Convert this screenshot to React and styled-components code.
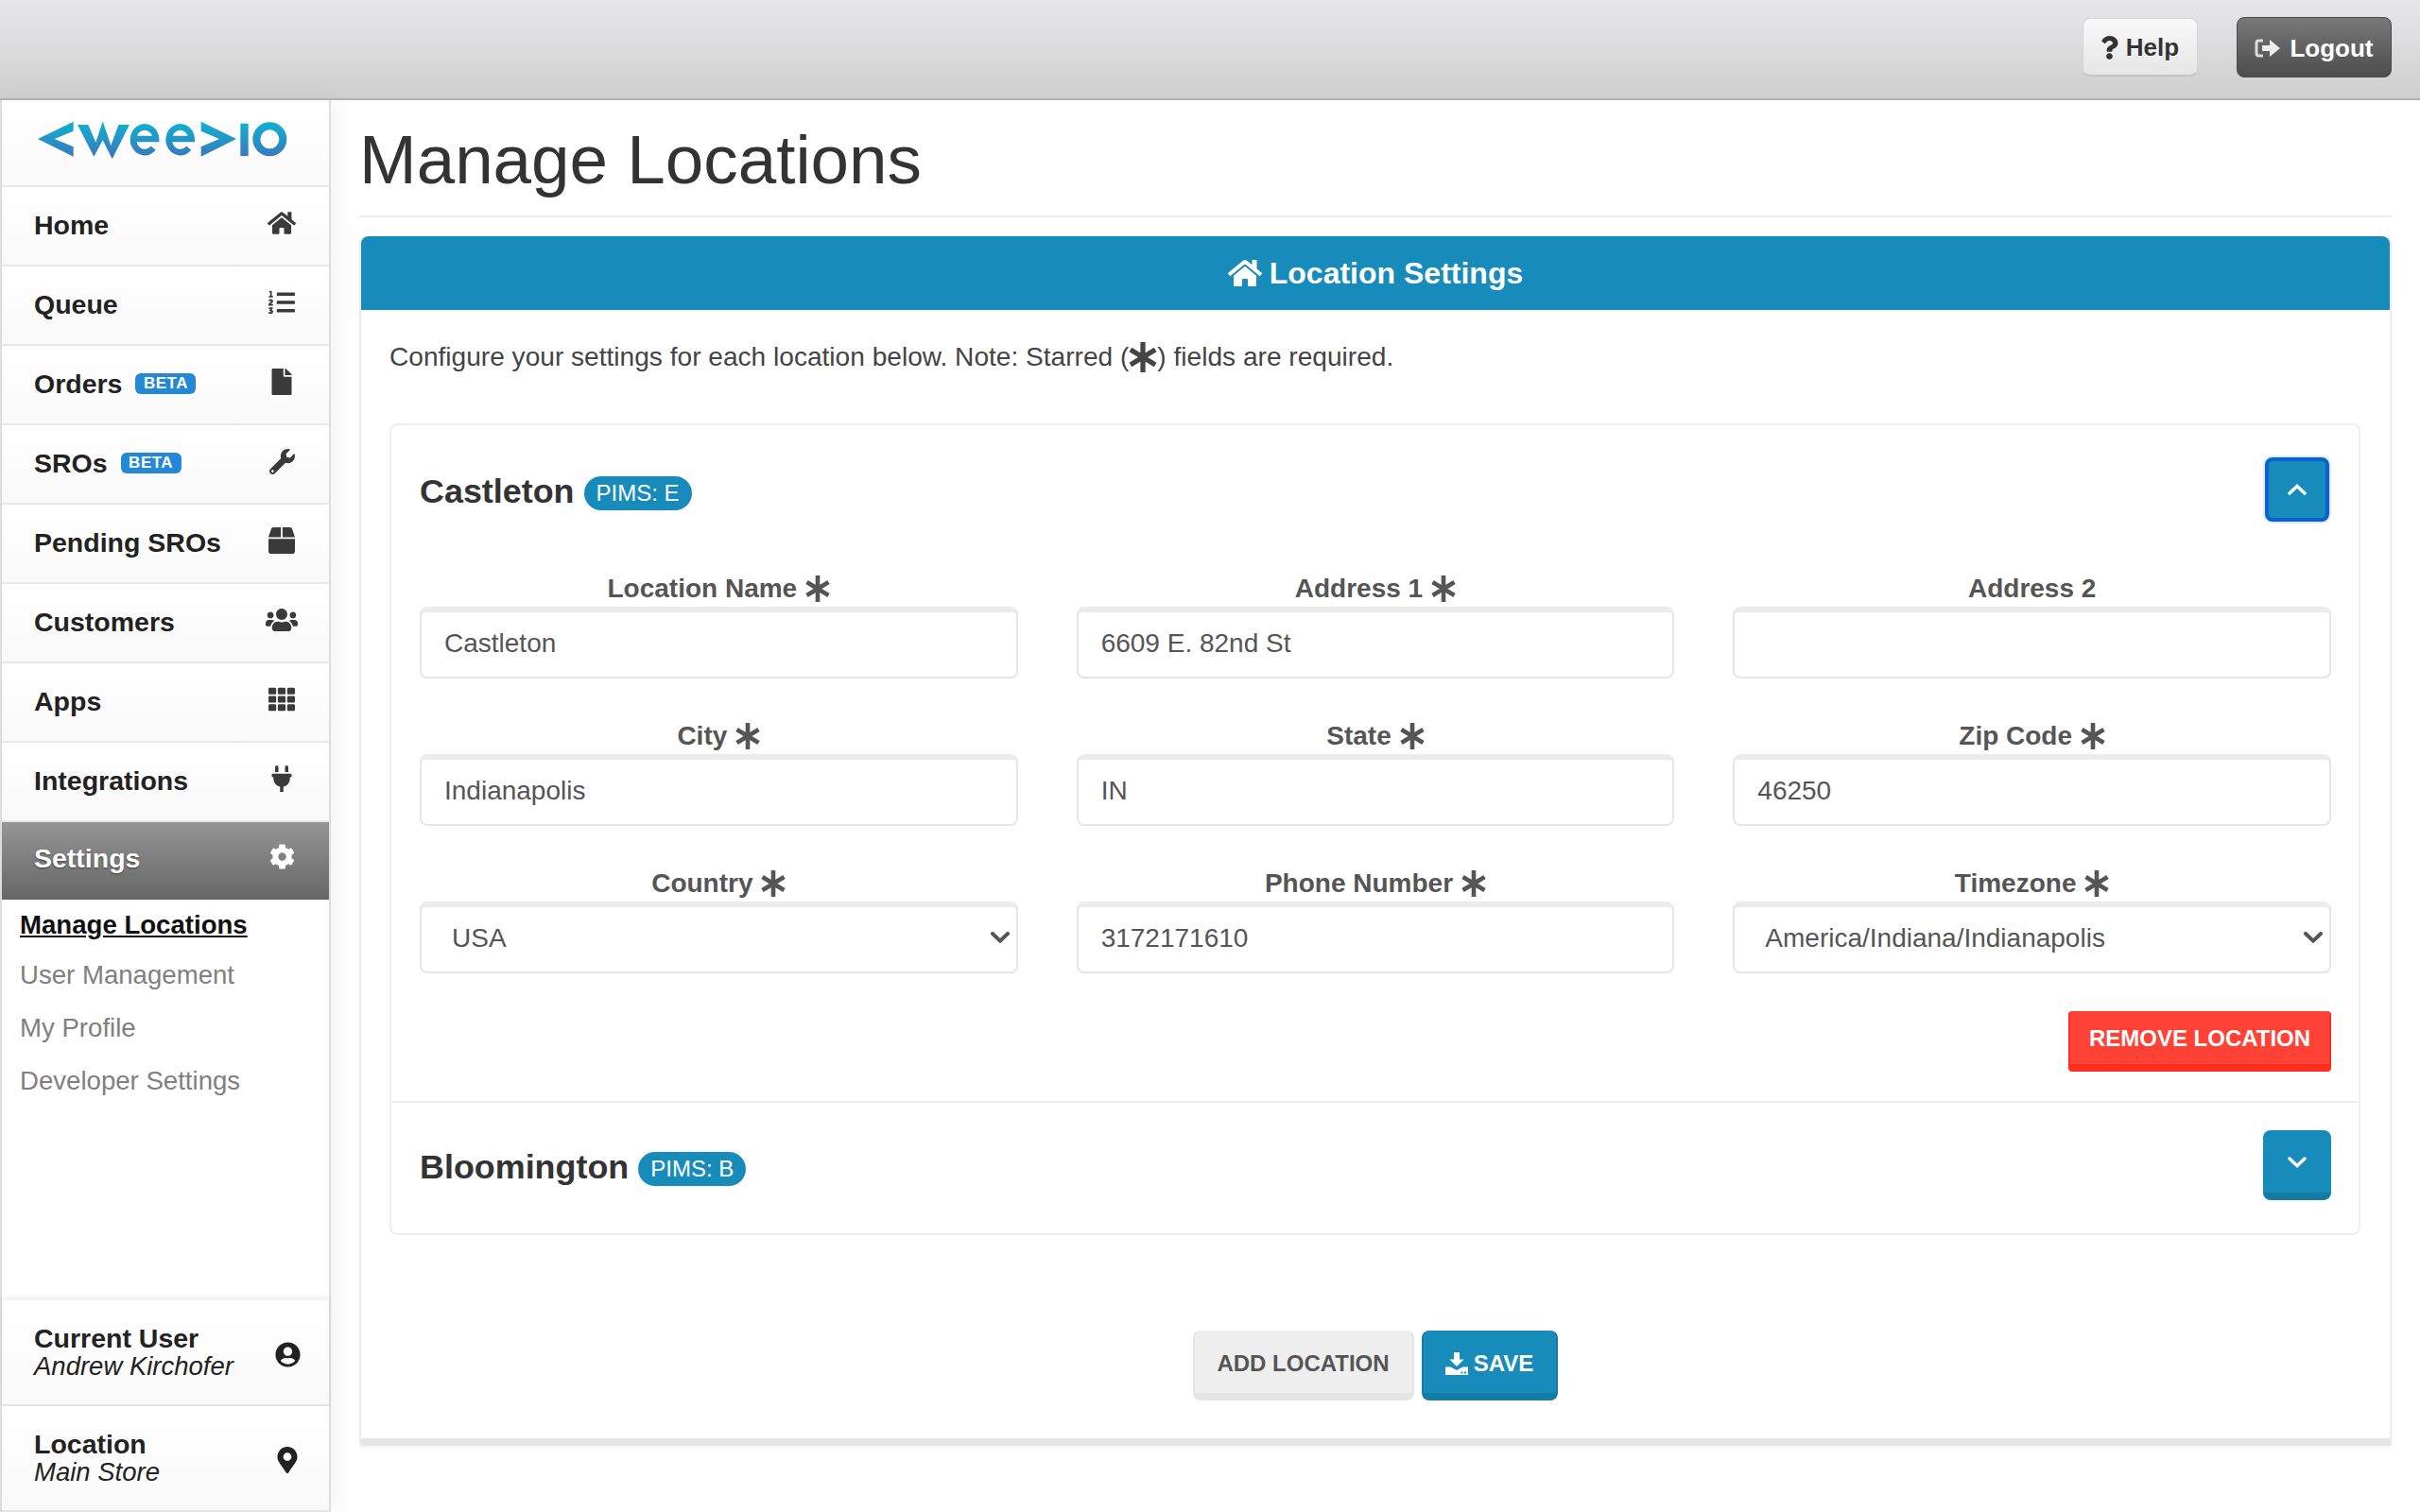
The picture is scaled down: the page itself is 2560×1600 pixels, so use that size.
import React from 'react';
import styled, { createGlobalStyle } from 'styled-components';
import {
  FaHome, FaListOl, FaFile, FaWrench, FaBox, FaUsers, FaTh, FaPlug, FaCog,
  FaUserCircle, FaMapMarkerAlt, FaQuestion,
} from 'react-icons/fa';

const FONT = '"Liberation Sans", Arial, Helvetica, sans-serif';

const Global = createGlobalStyle`
  html, body { margin: 0; padding: 0; background: #fff; }
  * { box-sizing: border-box; }
  body { font-family: ${FONT}; color: #555; }
`;

const Page = styled.div`
  width: 2560px;
  height: 1600px;
  display: flex;
  flex-direction: column;
  overflow: hidden;
  background: #fff;
`;

const TopBar = styled.header`
  height: 106px;
  flex: none;
  display: flex;
  justify-content: flex-end;
  align-items: center;
  gap: 41px;
  padding: 0 30px 4px 0;
  background: linear-gradient(#e7e6e9, #cfcfcf);
  border-bottom: 2px solid #b4b4b4;
`;

const HelpButton = styled.button`
  width: 122px;
  height: 62px;
  display: flex;
  align-items: center;
  justify-content: center;
  gap: 5px;
  font: bold 26px ${FONT};
  color: #333;
  text-shadow: 0 1px 0 #fff;
  background: linear-gradient(#f8f8f8, #e6e6e6);
  border: 1px solid #d6d6d6;
  border-bottom: 2px solid #c4c4c4;
  border-radius: 8px;
  padding: 2px 4px 0 0;
`;

const LogoutButton = styled.button`
  width: 164px;
  height: 64px;
  display: flex;
  align-items: center;
  justify-content: center;
  gap: 10px;
  font: bold 26px ${FONT};
  color: #fff;
  background: linear-gradient(#787878, #4d4d4d);
  border: 1px solid #4a4a4a;
  border-radius: 8px;
  padding: 2px 0 0;
`;

const Body = styled.div`
  flex: 1;
  min-height: 0;
  display: flex;
`;

const Sidebar = styled.aside`
  width: 350px;
  flex: none;
  display: flex;
  flex-direction: column;
  background: #fff;
  border-left: 2px solid #ddd;
  border-right: 2px solid #ddd;
  box-shadow: 6px 0 24px rgba(0, 0, 0, 0.05);
`;

const LogoRow = styled.div`
  height: 92px;
  flex: none;
  padding: 19px 0 0 34px;
  background: linear-gradient(#fff, #fafafa);
  border-bottom: 2px solid #e8e8e8;
  svg { display: block; }
`;

const NavItem = styled.div`
  flex: none;
  display: flex;
  align-items: center;
  justify-content: space-between;
  padding: ${p => (p.$active ? '0 30px 6px 34px' : '0 30px 2px 34px')};
  font-weight: bold;
  font-size: 28.5px;
  color: ${p => (p.$active ? '#fff' : '#222')};
  text-shadow: ${p => (p.$active ? '0 1px 2px rgba(0,0,0,.5)' : 'none')};
  background: ${p => (p.$active ? 'linear-gradient(#959595, #666)' : 'linear-gradient(#fff, #f9f9f9)')};
  border-bottom: ${p => (p.$active ? '0' : '2px solid #e8e8e8')};
  height: ${p => (p.$active ? '82px' : '84px')};
`;

const NavLabel = styled.span`
  display: flex;
  align-items: center;
  gap: 14px;
`;

const BetaBadge = styled.span`
  display: inline-block;
  width: 64px;
  height: 22px;
  line-height: 22px;
  text-align: center;
  border-radius: 6px;
  background: #2388d6;
  color: #fff;
  font-size: 17px;
  font-weight: bold;
  letter-spacing: 0.5px;
`;

const NavIcon = styled.span`
  width: 40px;
  display: flex;
  justify-content: center;
  align-items: center;
  color: ${p => (p.$active ? '#fff' : '#3a3a3a')};
  margin-top: -4px;
`;

const FooterIcon = styled.span`
  width: 40px;
  display: flex;
  justify-content: center;
  align-items: center;
  color: #222;
  margin-top: 4px;
`;

const SubList = styled.nav`
  flex: 1;
`;

const SubItem = styled.a`
  display: block;
  height: ${p => (p.$active ? '54px' : '56px')};
  line-height: ${p => (p.$active ? '54px' : '56px')};
  margin-bottom: ${p => (p.$active ? '-2px' : '0')};
  padding-left: 19px;
  font-size: 27.6px;
  font-weight: ${p => (p.$active ? 'bold' : 'normal')};
  color: ${p => (p.$active ? '#111' : '#808080')};
  text-decoration: ${p => (p.$active ? 'underline' : 'none')};
`;

const FooterBox = styled.div`
  flex: none;
  height: ${p => p.$h}px;
  display: flex;
  align-items: center;
  justify-content: space-between;
  padding: 0 24px 0 34px;
  background: linear-gradient(#fff, #f9f9f9);
  border-bottom: 2px solid #e4e4e4;
  box-shadow: ${p => (p.$shadow ? '0 -4px 6px rgba(0,0,0,.06)' : 'none')};
  color: #222;
`;

const FooterText = styled.div`
  font-size: 28.5px;
  line-height: 29px;
  b { display: block; font-weight: bold; }
  i { display: block; font-style: italic; font-size: 27.5px; }
`;

const Main = styled.main`
  flex: 1;
  min-width: 0;
  padding: 0 30px;
`;

const Title = styled.h1`
  margin: 0 0 20px;
  height: 124px;
  padding-top: 21px;
  font-size: 72.8px;
  line-height: 84px;
  font-weight: normal;
  color: #333;
  border-bottom: 2px solid #eee;
`;

const Card = styled.section`
  height: 1280px;
  border: 2px solid #ececec;
  border-top: 0;
  border-bottom: 8px solid #e6e6e6;
  border-radius: 8px 8px 4px 4px;
  box-shadow: 0 3px 3px rgba(0, 0, 0, 0.03);
  background: #fff;
`;

const CardHead = styled.div`
  height: 78px;
  display: flex;
  align-items: center;
  justify-content: center;
  gap: 8px;
  background: #178cbb;
  color: #fff;
  font-size: 32px;
  font-weight: bold;
  border-radius: 8px 8px 0 0;
`;

const CardBody = styled.div`
  padding: 0 31px 0 30px;
`;

const Intro = styled.p`
  margin: 0;
  height: 120px;
  padding-top: 31px;
  font-size: 28.1px;
  line-height: 38px;
  color: #444;
  display: flex;
  align-items: flex-start;
  svg { margin: 3px 0 0; }
`;

const LocationBox = styled.div`
  border: 2px solid #eee;
  border-radius: 8px;
`;

const LocationSection = styled.div`
  padding: ${p => p.$pad};
  & + & { border-top: 2px solid #eee; }
`;

const LocationHead = styled.div`
  display: flex;
  align-items: center;
  justify-content: space-between;
`;

const LocationName = styled.h3`
  margin: 0;
  padding-top: 4px;
  display: flex;
  align-items: center;
  gap: 10px;
  font-size: 35.9px;
  font-weight: bold;
  color: #333;
`;

const Pill = styled.span`
  height: 36px;
  line-height: 36px;
  padding: 0 13px;
  margin-top: 3px;
  border-radius: 18px;
  background: #178cbb;
  color: #fff;
  font-size: 24px;
  font-weight: normal;
`;

const ToggleButton = styled.button`
  width: 72px;
  height: 74px;
  display: flex;
  align-items: center;
  justify-content: center;
  padding: 2px 0 0;
  background: #178cbb;
  border: 0;
  border-bottom: 8px solid #147ca3;
  border-radius: 8px;
`;

const FocusedToggle = styled.button`
  width: 68px;
  height: 68px;
  margin: 2px;
  display: flex;
  align-items: center;
  justify-content: center;
  padding: 0;
  background: #178cbb;
  border: 4px solid #0a62d0;
  border-radius: 8px;
  box-shadow: 0 0 0 2px #dcebf5;
`;

const FieldGrid = styled.div`
  margin-top: 52px;
  display: grid;
  grid-template-columns: repeat(3, 1fr);
  column-gap: 62px;
  row-gap: 44px;
`;

const Field = styled.label`
  display: block;
`;

const FieldLabel = styled.span`
  height: 36px;
  padding-bottom: 3px;
  display: flex;
  align-items: center;
  justify-content: center;
  gap: 9px;
  font-size: 28px;
  font-weight: bold;
  color: #555;
`;

const TextInput = styled.input`
  display: block;
  width: 100%;
  height: 76px;
  padding: 0 24px 3px;
  font: 28px ${FONT};
  color: #555;
  background: #fff;
  border: 2px solid #e6e6e6;
  border-top: 6px solid #ebebeb;
  border-radius: 8px;
  outline: 0;
`;

const SelectWrap = styled.div`
  position: relative;
`;

const SelectInput = styled.select`
  display: block;
  width: 100%;
  height: 76px;
  padding: 0 32px 3px;
  font: 28px ${FONT};
  color: #555;
  background: #fff;
  border: 2px solid #e6e6e6;
  border-top: 6px solid #ebebeb;
  border-radius: 8px;
  outline: 0;
  appearance: none;
`;

const SelectArrow = styled.span`
  position: absolute;
  right: 9px;
  top: 32px;
  display: flex;
  pointer-events: none;
`;

const RemoveRow = styled.div`
  display: flex;
  justify-content: flex-end;
  margin-top: 40px;
`;

const RemoveButton = styled.button`
  width: 278px;
  height: 64px;
  padding: 2px 0 0;
  font: bold 24px ${FONT};
  color: #fff;
  background: #ff4136;
  border: 2px solid #ff2d1f;
  border-top: 0;
  border-bottom-width: 8px;
  border-radius: 4px;
`;

const Actions = styled.div`
  display: flex;
  justify-content: center;
  gap: 8px;
  margin-top: 101px;
`;

const AddButton = styled.button`
  width: 234px;
  height: 74px;
  padding: 3px 0 0;
  font: bold 24px ${FONT};
  color: #555;
  background: #eee;
  border: 2px solid #e4e4e4;
  border-top: 0;
  border-bottom-width: 8px;
  border-radius: 8px;
`;

const SaveButton = styled.button`
  width: 144px;
  height: 74px;
  padding: 3px 0 0;
  display: flex;
  align-items: center;
  justify-content: center;
  gap: 6px;
  font: bold 24px ${FONT};
  color: #fff;
  background: #178cbb;
  border: 2px solid #147ca3;
  border-top: 0;
  border-bottom-width: 8px;
  border-radius: 8px;
`;

const Logo = () => (
  <svg width="270" height="45" viewBox="110 375 810 135" aria-label="weeio logo">
    <defs>
      <linearGradient id="lg" gradientUnits="userSpaceOnUse" x1="0" y1="385" x2="0" y2="500">
        <stop offset="0" stopColor="#10b2d2" />
        <stop offset="1" stopColor="#3a77bb" />
      </linearGradient>
    </defs>
    <g fill="url(#lg)">
      <polygon points="235,386 122,441 235,497 235,466 175,441 235,416" />
      <polygon points="248,396 282,396 306,452 328,385 354,462 378,396 413,396 358,505 328,445 300,497" />
      <polygon points="640,386 752,441 640,497 640,466 698,441 640,416" />
      <rect x="765" y="392" width="25" height="103" />
    </g>
    <g fill="none" stroke="url(#lg)" strokeWidth="24">
      <path d="M425 441 H497 A36 40 0 1 0 488 470" strokeWidth="20" />
      <path d="M538 441 H610 A36 40 0 1 0 601 470" strokeWidth="20" />
      <circle cx="858" cy="442" r="42" />
    </g>
  </svg>
);

const Star = ({ w = 26, h = 28, color = '#555' }) => (
  <svg width={w} height={h} viewBox="0 0 26 28" fill="none" stroke={color} strokeWidth="4.6">
    <path d="M13 0V28M1.5 7L24.5 21M1.5 21L24.5 7" />
  </svg>
);

const Chevron = ({ up, w = 20, h = 12, color = '#fff', sw = 3.4 }) => (
  <svg width={w} height={h} viewBox="0 0 20 12" fill="none" stroke={color} strokeWidth={sw} strokeLinecap="round" strokeLinejoin="miter">
    <path d={up ? 'M2 10L10 2.4L18 10' : 'M2 2L10 9.6L18 2'} />
  </svg>
);

const LogoutIcon = () => (
  <svg width="27" height="20" viewBox="0 0 27 20">
    <path d="M9 2H4.5A2.5 2.5 0 0 0 2 4.5V15.5A2.5 2.5 0 0 0 4.5 18H9" fill="none" stroke="#ddd" strokeWidth="3" />
    <path d="M8 7H16V1L27 10L16 19V13H8Z" fill="#eee" />
  </svg>
);

const SaveIcon = () => (
  <svg width="24" height="24" viewBox="0 0 24 24">
    <path d="M9 0H15V7.5H19.5L12 15L4.5 7.5H9Z" fill="#fff" />
    <path d="M0 15.5H5.5L12 19L18.5 15.5H24V24H0Z" fill="#fff" />
    <rect x="16.5" y="20.5" width="2" height="2" fill="#178cbb" />
    <rect x="20" y="20.5" width="2" height="2" fill="#178cbb" />
  </svg>
);

const NAV = [
  { label: 'Home', icon: <FaHome size={30} /> },
  { label: 'Queue', icon: <FaListOl size={28} /> },
  { label: 'Orders', beta: true, icon: <FaFile size={28} /> },
  { label: 'SROs', beta: true, icon: <FaWrench size={27} /> },
  { label: 'Pending SROs', icon: <FaBox size={28} /> },
  { label: 'Customers', icon: <FaUsers size={34} /> },
  { label: 'Apps', icon: <FaTh size={28} /> },
  { label: 'Integrations', icon: <FaPlug size={28} /> },
  { label: 'Settings', active: true, icon: <FaCog size={27} /> },
];

const SUB = ['Manage Locations', 'User Management', 'My Profile', 'Developer Settings'];

const FIELDS = [
  { label: 'Location Name', req: true, value: 'Castleton' },
  { label: 'Address 1', req: true, value: '6609 E. 82nd St' },
  { label: 'Address 2', value: '' },
  { label: 'City', req: true, value: 'Indianapolis' },
  { label: 'State', req: true, value: 'IN' },
  { label: 'Zip Code', req: true, value: '46250' },
  { label: 'Country', req: true, value: 'USA', select: true },
  { label: 'Phone Number', req: true, value: '3172171610' },
  { label: 'Timezone', req: true, value: 'America/Indiana/Indianapolis', select: true },
];

export default function App() {
  return (
    <Page>
      <Global />
      <TopBar>
        <HelpButton><FaQuestion size={25} />Help</HelpButton>
        <LogoutButton><LogoutIcon />Logout</LogoutButton>
      </TopBar>
      <Body>
        <Sidebar>
          <LogoRow><Logo /></LogoRow>
          {NAV.map(n => (
            <NavItem key={n.label} $active={n.active}>
              <NavLabel>{n.label}{n.beta && <BetaBadge>BETA</BetaBadge>}</NavLabel>
              <NavIcon $active={n.active}>{n.icon}</NavIcon>
            </NavItem>
          ))}
          <SubList>
            {SUB.map((s, i) => <SubItem key={s} $active={i === 0}>{s}</SubItem>)}
          </SubList>
          <FooterBox $h={112} $shadow>
            <FooterText><b>Current User</b><i>Andrew Kirchofer</i></FooterText>
            <FooterIcon><FaUserCircle size={27} /></FooterIcon>
          </FooterBox>
          <FooterBox $h={112}>
            <FooterText><b>Location</b><i>Main Store</i></FooterText>
            <FooterIcon><FaMapMarkerAlt size={28} /></FooterIcon>
          </FooterBox>
        </Sidebar>
        <Main>
          <Title>Manage Locations</Title>
          <Card>
            <CardHead><FaHome size={36} />Location Settings</CardHead>
            <CardBody>
              <Intro>
                Configure your settings for each location below. Note: Starred (
                <Star w={30} h={32} color="#444" />
                ) fields are required.
              </Intro>
              <LocationBox>
                <LocationSection $pad="32px 29px 31px 30px">
                  <LocationHead>
                    <LocationName>Castleton <Pill>PIMS: E</Pill></LocationName>
                    <FocusedToggle><Chevron up /></FocusedToggle>
                  </LocationHead>
                  <FieldGrid>
                    {FIELDS.map(f => (
                      <Field key={f.label}>
                        <FieldLabel>{f.label}{f.req && <Star />}</FieldLabel>
                        {f.select ? (
                          <SelectWrap>
                            <SelectInput defaultValue={f.value}>
                              <option>{f.value}</option>
                            </SelectInput>
                            <SelectArrow><Chevron w={20} h={12} color="#555" sw={4} /></SelectArrow>
                          </SelectWrap>
                        ) : (
                          <TextInput readOnly value={f.value} />
                        )}
                      </Field>
                    ))}
                  </FieldGrid>
                  <RemoveRow><RemoveButton>REMOVE LOCATION</RemoveButton></RemoveRow>
                </LocationSection>
                <LocationSection $pad="29px 29px 35px 30px">
                  <LocationHead>
                    <LocationName>Bloomington <Pill>PIMS: B</Pill></LocationName>
                    <ToggleButton><Chevron /></ToggleButton>
                  </LocationHead>
                </LocationSection>
              </LocationBox>
              <Actions>
                <AddButton>ADD LOCATION</AddButton>
                <SaveButton><SaveIcon />SAVE</SaveButton>
              </Actions>
            </CardBody>
          </Card>
        </Main>
      </Body>
    </Page>
  );
}
